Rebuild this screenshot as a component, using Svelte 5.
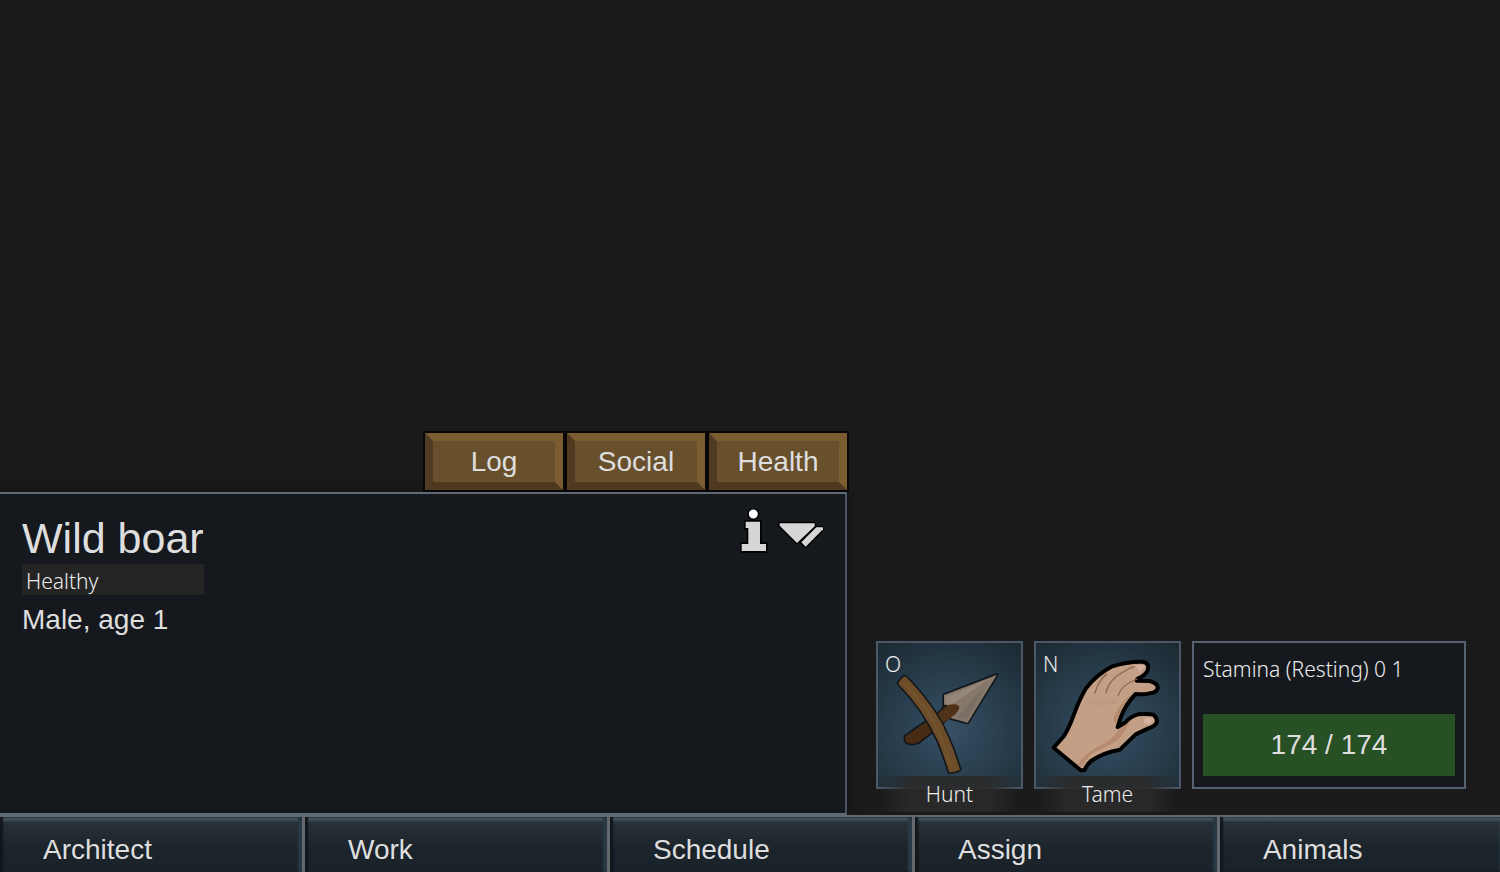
<script lang="ts">
	interface Gizmo {
		hotkey: string;
		label: string;
		icon: 'hunt' | 'tame';
	}

	const tabs = ['Log', 'Social', 'Health'];
	const menu = ['Architect', 'Work', 'Schedule', 'Assign', 'Animals'];

	const gizmos: Gizmo[] = [
		{ hotkey: 'O', label: 'Hunt', icon: 'hunt' },
		{ hotkey: 'N', label: 'Tame', icon: 'tame' }
	];

	let stamina = 174;
	let maxStamina = 174;
</script>

<div class="screen">
	<div class="dock">
		<section class="inspector">
			<div class="tabs">
				{#each tabs as tab}
					<button class="tab">{tab}</button>
				{/each}
			</div>

			<div class="pane">
				<div class="pane-header">
					<h1>Wild boar</h1>
					<div class="pane-actions">
						<button class="icon-btn" aria-label="Info">
							<svg width="28" height="44" viewBox="45 27 84 132">
								<circle cx="85" cy="42" r="16" fill="#fff" stroke="#000" stroke-width="5" />
								<path d="M62 65H105V132H123V153H50V132H70V84H62Z" fill="#d6d6d6" stroke="#000" stroke-width="10" paint-order="stroke" />
							</svg>
						</button>
						<button class="icon-btn" aria-label="Next">
							<svg width="48" height="28" viewBox="156 60 144 84">
								<g fill="#d6d6d6" stroke="#000" stroke-width="9" stroke-linejoin="round" paint-order="stroke">
									<path d="M164 70H269V79L216 129L164 77Z" />
									<path d="M274 82H294V88L242 140L229 127Z" />
								</g>
							</svg>
						</button>
					</div>
				</div>
				<div class="health"><span>Healthy</span></div>
				<p class="details">Male, age 1</p>
			</div>
		</section>

		<section class="gizmos">
			{#each gizmos as gizmo}
				<button class="gizmo">
					<span class="hotkey">{gizmo.hotkey}</span>
					<svg class="art" viewBox="24 24 429 432">
						{#if gizmo.icon === 'hunt'}
							<g stroke="#11161a" stroke-width="10" stroke-linejoin="round" paint-order="stroke">
								<path d="M222 180L381 119L293 263L243 250L222 217Z" fill="#85786b" />
								<path d="M106 304L160 266L205 236L228 213L236 244L205 276L145 322Q125 331 109 322Q104 314 106 304Z" fill="#482b13" />
							</g>
							<path d="M228 187L360 130L280 185L254 203L228 211Z" fill="#94867a" />
							<path d="M279 226Q315 190 349 151L290 254L263 248Z" fill="#766b62" opacity=".7" />
							<path d="M198 240L234 211Q262 202 268 216Q268 230 244 247L208 272Z" fill="#4f3217" />
							<path d="M85 146Q92 130 106 124Q153 170 195 232Q239 300 270 404Q253 413 237 412Q223 363 204 318Q160 222 85 146Z" fill="#6d4d29" stroke="#11161a" stroke-width="10" stroke-linejoin="round" paint-order="stroke" />
							<path d="M186 262L210 256L222 278L200 290Z" fill="#6d4d29" />
							<path d="M100 143Q151 193 189 256Q222 320 244 401" fill="none" stroke="#7b5930" stroke-width="10" opacity=".4" />
						{:else}
							<path
								d="M77 338L108 303Q124 277 139 235Q155 192 174 160Q205 119 253 94Q299 79 342 80Q360 82 361 97Q359 116 338 127Q326 130 326 137L365 138Q391 146 389 160Q384 174 365 175Q346 179 323 177Q293 208 279 245L269 276L291 263Q306 245 330 238Q361 235 376 239Q386 246 387 261Q382 274 361 280L323 298L276 344Q226 352 189 378Q175 391 170 405L158 406Z"
								fill="#c39f85" stroke="#000" stroke-width="12" stroke-linejoin="round" />
							<path d="M274 282L311 254Q295 279 276 309Q250 332 210 345Q180 361 165 390L157 397L148 390Q173 352 219 331Q255 312 274 282Z" fill="#a9785b" opacity=".5" />
							<path d="M313 178Q289 204 273 243L264 270L256 252Q266 220 296 188Z" fill="#a77b5f" opacity=".55" />
							<path d="M321 91L350 89Q351 104 328 111Q337 103 321 91ZM350 248L374 248Q379 258 366 267Q353 271 347 260Z" fill="#d5b3a0" />
							<g fill="none" stroke="#8b6852" stroke-width="4" stroke-linecap="round">
								<path d="M201 174Q210 139 236 117" />
								<path d="M234 173Q243 132 291 108Q307 98 318 95" />
								<path d="M270 182Q280 150 327 132" />
							</g>
							<path d="M173 197Q221 210 267 198" fill="none" stroke="#ae9477" stroke-width="14" opacity=".35" />
						{/if}
					</svg>
					<span class="gizmo-label">{gizmo.label}</span>
				</button>
			{/each}

			<div class="stamina">
				<div class="stamina-title">Stamina (Resting) 0 1</div>
				<div class="bar">
					<div class="bar-fill" style="width: {(stamina / maxStamina) * 100}%"></div>
					<span class="bar-text">{stamina} / {maxStamina}</span>
				</div>
			</div>
		</section>
	</div>

	<nav class="menu">
		{#each menu as item}
			<button class="menu-item">{item}</button>
		{/each}
	</nav>
</div>

<style>
	:global(body) {
		background: #1a1a1a;
	}

	.screen {
		min-height: 100vh;
		display: flex;
		flex-direction: column;
		justify-content: flex-end;
		overflow: hidden;
		color: #dedede;
		font-family: 'Liberation Sans', Arial, sans-serif;
		font-size: 28px;
		line-height: 32px;
	}

	button {
		margin: 0;
		padding: 0;
		border: none;
		background: none;
		color: inherit;
		font: inherit;
		cursor: pointer;
	}

	svg {
		display: block;
	}

	.dock {
		display: grid;
		grid-template-columns: 847fr 653fr;
		align-items: end;
	}

	/* Inspector */
	.tabs {
		display: flex;
		justify-content: flex-end;
		gap: 4px;
		margin-bottom: 2px;
	}

	.tab {
		width: 138px;
		height: 57px;
		box-sizing: border-box;
		border: 8px solid;
		border-color: #7b5d31 #7b5d31 #4e3920 #4e3b22;
		background: #69502d;
		outline: 2px solid #080705;
	}

	.pane {
		min-height: 323px;
		box-sizing: border-box;
		padding: 15px 20px 20px 22px;
		border: 2px solid #5f6a79;
		border-right-color: #465464;
		border-left: none;
		background: #15191d;
		box-shadow: 0 0 8px #111;
	}

	.pane-header {
		display: flex;
		justify-content: space-between;
		align-items: flex-start;
	}

	h1 {
		margin: 5px 0 2px;
		font-size: 43px;
		font-weight: 400;
		line-height: 48px;
	}

	.pane-actions {
		display: flex;
		align-items: flex-end;
		gap: 9px;
	}

	.icon-btn:last-child {
		padding-bottom: 5px;
	}

	.health {
		width: 182px;
		height: 31px;
		box-sizing: border-box;
		padding: 2px 4px;
		background: #242424;
	}

	.health,
	.hotkey,
	.gizmo-label,
	.stamina-title {
		color: #ececec;
		font-family: 'Noto Sans', 'Open Sans', sans-serif;
		font-size: 21px;
		font-weight: 300;
		line-height: 30px;
	}

	.details {
		margin: 9px 0 0;
	}

	/* Command gizmos */
	.gizmos {
		display: flex;
		gap: 11px;
		padding: 0 34px 26px 29px;
	}

	.gizmo {
		position: relative;
		width: 147px;
		height: 148px;
		flex: none;
		box-sizing: border-box;
		border: 2px solid #4b5868;
		background: radial-gradient(circle at 50% 60%, #365065 0%, #293f4f 45%, #1c2932 100%);
	}

	.art {
		width: 100%;
		height: 100%;
	}

	.hotkey {
		position: absolute;
		top: 6px;
		left: 7px;
	}

	.gizmo-label {
		position: absolute;
		right: 0;
		bottom: -25px;
		left: 0;
		padding: 3px 0;
		background: linear-gradient(90deg, transparent, #2a2a2ae6 22%, #2a2a2ae6 78%, transparent);
	}

	.stamina {
		flex: 1;
		box-sizing: border-box;
		padding: 11px 9px 10px;
		border: 2px solid #566171;
		background: #15191d;
	}

	.bar {
		position: relative;
		height: 62px;
		margin-top: 30px;
		background: #0d0f11;
	}

	.bar-fill {
		height: 100%;
		background: #275025;
	}

	.bar-text {
		position: absolute;
		inset: 0;
		display: flex;
		align-items: center;
		justify-content: center;
	}

	/* Main menu */
	.menu {
		position: relative;
		display: flex;
		border-top: 2px solid #62686e;
	}

	.menu-item {
		width: 20.333%;
		height: 55px;
		box-sizing: border-box;
		padding: 10px 0 0 43px;
		border-right: 3px solid #66696b;
		background: linear-gradient(#2b343b 0%, #1b232b 60%, #1a222a 100%);
		box-shadow:
			inset 3px 0 2px #10161a,
			inset -4px 0 2px #293a44,
			inset 0 4px 2px #43525a;
		text-align: left;
	}

	.menu-item:last-child {
		flex: 1;
		border-right: none;
		box-shadow:
			inset 3px 0 2px #10161a,
			inset 0 4px 2px #43525a;
	}
</style>
